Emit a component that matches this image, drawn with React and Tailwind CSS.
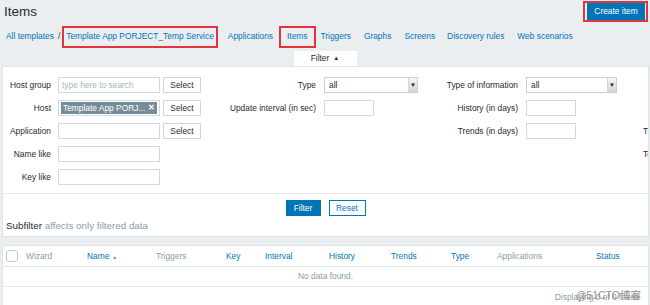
import React from "react";

const link = "text-[#0275b8]";
const muted = "text-[#8a9ca6]";

function DropSelect({ w }) {
  return (
    <div className={`flex h-4 items-stretch border border-[#c9cfd3] bg-white ${w}`}>
      <span className="flex-1 pl-[4px] leading-[14px] text-[#1f2c33]">all</span>
      <span className="flex w-[9px] items-center justify-center border-l border-[#d6d6d6] bg-gradient-to-b from-[#f7f7f7] to-[#d4d4d4] text-[6px] leading-none text-[#222]">
        ▼
      </span>
    </div>
  );
}

function TextBox({ w, children }) {
  return (
    <div className={`flex h-4 items-center border border-[#d3d9dd] bg-white ${w}`}>
      {children}
    </div>
  );
}

function SelectBtn() {
  return (
    <button className="ml-[3px] h-4 w-[38px] border border-[#cfd5d9] bg-white text-[8.4px] leading-[14px] text-[#1f2c33]">
      Select
    </button>
  );
}

function Label({ children }) {
  return <div className="h-4 text-right leading-4 text-[#1f2c33]">{children}</div>;
}

export default function App() {
  const headers = [
    { t: "Wizard", c: muted },
    { t: "Name", c: link, sort: true },
    { t: "Triggers", c: muted },
    { t: "Key", c: link },
    { t: "Interval", c: link },
    { t: "History", c: link },
    { t: "Trends", c: link },
    { t: "Type", c: link },
    { t: "Applications", c: muted },
    { t: "Status", c: link },
  ];

  return (
    <div className="h-[305px] w-[650px] overflow-hidden bg-[#ebeef0] font-['Liberation_Sans',Arial,sans-serif] text-[8.4px] text-[#1f2c33]">
      {/* title row */}
      <div className="flex h-[24px] items-center justify-between">
        <h1 className="pl-[4px] text-[13.5px] leading-none text-[#1f2c33]">Items</h1>
        <div className="mr-[2px] mt-[-2px] flex h-[21px] w-[65px] items-center justify-end border-2 border-[#e2343d] pr-[1px]">
          <button className="h-[17px] w-[58px] bg-[#0275b8] text-[8.4px] text-white">Create item</button>
        </div>
      </div>

      {/* breadcrumbs / nav */}
      <div className="mt-[1px] flex h-[23px] items-center whitespace-nowrap">
        <span className={`ml-[6px] ${link}`}>All templates</span>
        <span className="ml-[4px] text-[#1f2c33]">/</span>
        <span className={`ml-[2px] flex h-[22px] items-center border-2 border-[#e2343d] px-[2px] ${link}`}>
          Template App PORJECT_Temp Service
        </span>
        <span className={`ml-[10px] ${link}`}>Applications</span>
        <span className={`ml-[6px] flex h-[22px] items-center border-2 border-[#e2343d] px-[6px] ${link}`}>Items</span>
        <span className={`ml-[5px] ${link}`}>Triggers</span>
        <span className={`ml-[13px] ${link}`}>Graphs</span>
        <span className={`ml-[13px] ${link}`}>Screens</span>
        <span className={`ml-[12px] ${link}`}>Discovery rules</span>
        <span className={`ml-[13px] ${link}`}>Web scenarios</span>
      </div>

      {/* filter tab */}
      <div className="mt-[3px] flex justify-center">
        <div className="flex h-[15px] w-[63px] items-center justify-center gap-[4px] bg-white text-[#1f2c33]">
          Filter <span className="text-[6px]">▲</span>
        </div>
      </div>

      {/* filter panel */}
      <div className="ml-[2px] mr-[1px] overflow-hidden border border-[#dde3e6] bg-white">
        <div className="flex whitespace-nowrap border-b border-[#e6eaec] pb-[8px] pt-[10px]">
          <div className="grid grid-cols-[48px_143px] items-center gap-x-[7px] gap-y-[7px]">
            <Label>Host group</Label>
            <div className="flex">
              <TextBox w="w-[102px]">
                <span className="pl-[3px] text-[#a9b4ba]">type here to search</span>
              </TextBox>
              <SelectBtn />
            </div>
            <Label>Host</Label>
            <div className="flex">
              <TextBox w="w-[102px]">
                <span className="ml-[2px] flex h-[12px] w-[96px] items-center justify-between bg-[#768d99] px-[2px] text-white">
                  <span>Template App PORJ...</span>
                  <span className="text-[8px] font-bold">✕</span>
                </span>
              </TextBox>
              <SelectBtn />
            </div>
            <Label>Application</Label>
            <div className="flex">
              <TextBox w="w-[102px]" />
              <SelectBtn />
            </div>
            <Label>Name like</Label>
            <TextBox w="w-[102px]" />
            <Label>Key like</Label>
            <TextBox w="w-[102px]" />
          </div>

          <div className="grid h-fit grid-cols-[115px_94px] items-center gap-x-[8px] gap-y-[7px]">
            <Label>Type</Label>
            <DropSelect w="w-[94px]" />
            <Label>Update interval (in sec)</Label>
            <TextBox w="w-[50px]" />
          </div>

          <div className="grid h-fit grid-cols-[100px_91px] items-center gap-x-[8px] gap-y-[7px]">
            <Label>Type of information</Label>
            <DropSelect w="w-[91px]" />
            <Label>History (in days)</Label>
            <TextBox w="w-[50px]" />
            <Label>Trends (in days)</Label>
            <TextBox w="w-[50px]" />
          </div>

          <div className="flex flex-col gap-y-[7px] pl-[26px]">
            <div className="h-4" />
            <div className="h-4" />
            <div className="h-4 leading-4">T</div>
            <div className="h-4 leading-4">Te</div>
          </div>
        </div>

        <div className="flex justify-center gap-[8px] pt-[6px]">
          <button className="h-4 w-[35px] bg-[#0275b8] text-[8.4px] text-white">Filter</button>
          <button className="h-4 w-[37px] border border-[#0275b8] bg-white text-[8.4px] text-[#0275b8]">Reset</button>
        </div>

        <div className="mt-[3px] h-[17px] pb-[3px] pl-[3px] text-[9.8px] leading-[14px]">
          <span className="text-[#1f2c33]">Subfilter</span>{" "}
          <span className="text-[#8a9ca6]">affects only filtered data</span>
        </div>
      </div>

      {/* table */}
      <div className="relative ml-[2px] mr-[1px] mt-[8px] h-[64px] border border-[#dde3e6] bg-white">
        <div className="grid h-[21px] grid-cols-[23px_61px_69px_70px_39px_64px_62px_60px_46px_99px_1fr] items-center border-b border-[#dde3e6]">
          <div className="pl-[3px]">
            <div className="h-[12px] w-[12px] rounded-[3px] border border-[#c3cacf] bg-white" />
          </div>
          {headers.map((h) => (
            <div key={h.t} className={h.c}>
              {h.t}
              {h.sort && <span className="ml-[3px] text-[5px] text-[#768d99]">▲</span>}
            </div>
          ))}
        </div>
        <div className="flex h-[20px] items-center justify-center border-b border-[#e6eaec] text-[#8a9ca6]">
          No data found.
        </div>
        <div className="flex h-[20px] items-center justify-end pr-[8px] text-[#8a9ca6]">
          Displaying 0 of 0 found
        </div>
        <div className="absolute right-[7px] top-[44px] font-['Liberation_Sans','Noto_Sans_CJK_SC',sans-serif] text-[10.5px] leading-none text-[#7a7a7a] opacity-80">
          @51CTO博客
        </div>
      </div>
    </div>
  );
}
